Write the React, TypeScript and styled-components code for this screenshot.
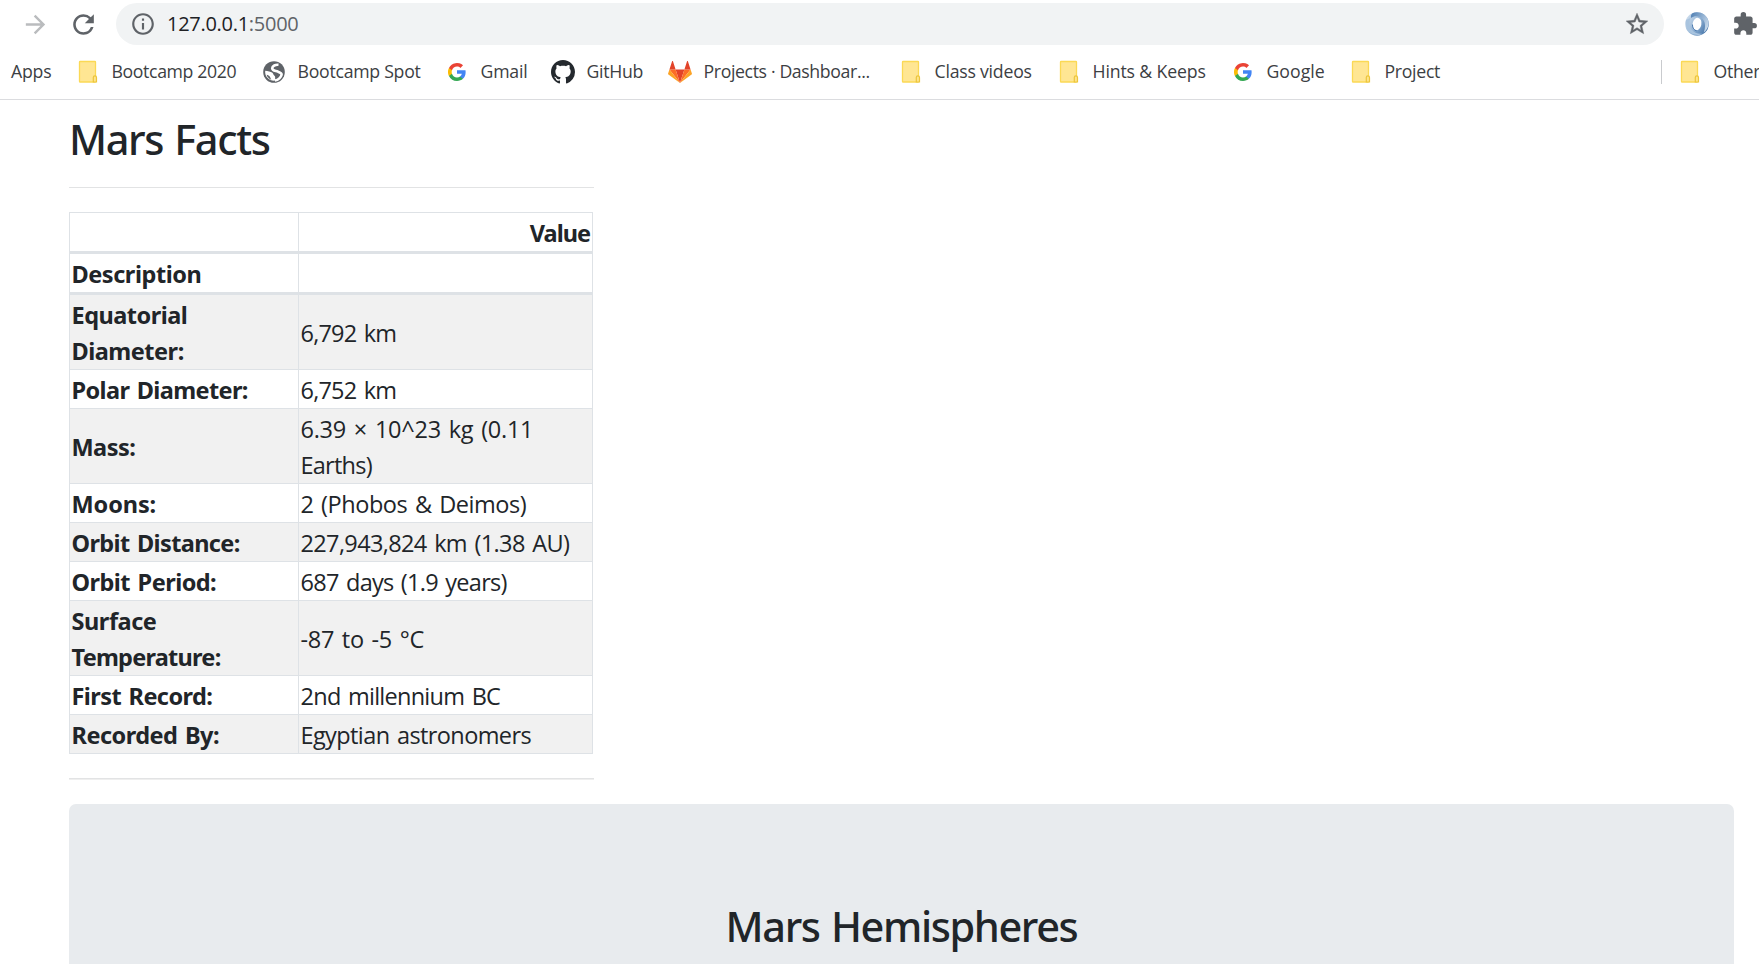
import React from "react";
import styled, { createGlobalStyle } from "styled-components";
import {
  MdArrowForward,
  MdExtension,
  MdInfoOutline,
  MdRefresh,
  MdStarBorder,
} from "react-icons/md";

const GlobalStyle = createGlobalStyle`
  *, *::before, *::after { box-sizing: border-box; }
  body {
    margin: 0;
    background: #fff;
    color: #212529;
    font-family: "Open Sans", "Noto Sans", sans-serif;
    overflow: hidden;
  }
`;

const Window = styled.div`
  width: 1759px;
  height: 964px;
  overflow: hidden;
  background: #fff;
`;

const Chrome = styled.header`
  height: 100px;
  border-bottom: 1px solid #dbdcdf;
`;

const Toolbar = styled.div`
  display: flex;
  align-items: center;
  height: 45px;
  padding: 3px 0 0 20px;
`;

const ToolButton = styled.span<{ $gap: number; $dim?: boolean }>`
  display: grid;
  place-items: center;
  flex: none;
  width: 30px;
  height: 30px;
  margin-right: ${(p) => p.$gap}px;
  color: ${(p) => (p.$dim ? "#babcbe" : "#5f6368")};
`;

const AddressBar = styled.div`
  display: flex;
  align-items: center;
  flex: none;
  width: 1548px;
  height: 42px;
  margin-right: 18px;
  padding: 0 14px;
  border-radius: 21px;
  background: #f1f3f4;
  color: #5f6368;
`;

const Address = styled.span`
  flex: 1;
  margin-left: 11px;
  font-size: 20px;
  line-height: 28px;
  letter-spacing: -0.28px;
  color: #5f6368;
`;

const Host = styled.span`
  color: #202124;
`;

const StarIcon = styled(MdStarBorder)`
  path:not([fill="none"]) {
    stroke: currentColor;
    stroke-width: 0.4px;
  }
`;

const BookmarkBar = styled.nav`
  display: flex;
  align-items: center;
  height: 54px;
`;

const Bookmark = styled.a<{ $width: number; $spacing: number }>`
  display: flex;
  align-items: center;
  flex: none;
  gap: 11.5px;
  width: ${(p) => p.$width}px;
  height: 28px;
  font-size: 17.7px;
  line-height: 24px;
  letter-spacing: ${(p) => p.$spacing}px;
  white-space: nowrap;
  color: #3c4043;
`;

const BookmarkLabel = styled.span`
  padding-bottom: 2px;
`;

const AppsLink = styled(Bookmark)`
  padding-left: 11px;
`;

const BookmarkIcon = styled.span`
  display: grid;
  place-items: center;
  flex: none;
  width: 24px;
  height: 24px;
`;

const Separator = styled.span`
  width: 1px;
  height: 24px;
  margin: 0 16px 0 auto;
  background: #c9cbce;
`;

const OtherBookmarks = styled(Bookmark)`
  overflow: hidden;
`;

const Page = styled.main`
  padding: 14px 25px 0 69px;
`;

const Title = styled.h2`
  margin: 0;
  font: 500 41.5px/50px "Noto Sans", sans-serif;
  letter-spacing: -1.4px;
  word-spacing: 2px;
`;

const Facts = styled.section`
  width: 525px;
`;

const Rule = styled.hr<{ $heavy?: boolean }>`
  height: ${(p) => (p.$heavy ? 2 : 1)}px;
  margin: ${(p) => (p.$heavy ? "24px 0" : "23px 0 24px")};
  border: 0;
  border-top: 1px solid #e2e3e4;
  background: #efefef;
`;

const Table = styled.table`
  width: 524px;
  border-collapse: collapse;
  table-layout: fixed;
  font-size: 23.5px;
  line-height: 36px;
  word-spacing: 2px;
`;

const Cell = styled.td`
  padding: 2px 2px 0 1.5px;
  border: 1px solid #dee2e6;
  text-align: left;
  vertical-align: middle;
`;

const Label = styled(Cell)`
  font-family: "Noto Sans", sans-serif;
  font-weight: 700;
`;

const HeadCell = styled(Label)<{ $right?: boolean; $height: number }>`
  height: ${(p) => p.$height}px;
  padding-top: 1px;
  border-bottom-width: 3px;
  text-align: ${(p) => (p.$right ? "right" : "left")};
`;

const LabelColumn = styled.col`
  width: 229px;
`;

const Row = styled.tr`
  &:nth-child(odd) {
    background: #f1f1f1;
  }
`;

const Line = styled.span<{ $spacing: number }>`
  display: block;
  letter-spacing: ${(p) => p.$spacing}px;
  white-space: nowrap;
`;

const Jumbotron = styled.section`
  height: 300px;
  padding-top: 97px;
  border-radius: 7px;
  background: #e8ebee;
  text-align: center;
`;

const FolderIcon = () => (
  <svg width="20" height="24" viewBox="0 0 20 24">
    <rect x="1.5" y="1.5" width="16" height="20.5" rx="0.6" fill="#ffe693" stroke="#fbd955" strokeWidth="1.3" />
    <path d="M15.3 22v-4.6a1.6 1.6 0 0 1 3.2 0V22z" fill="#ffe48a" stroke="#ecc53c" strokeWidth="1.2" />
  </svg>
);

const GlobeIcon = () => (
  <svg width="22" height="22" viewBox="0 0 22 22">
    <circle cx="11" cy="11" r="10.8" fill="#5f6368" />
    <path
      d="M15.5 3.8C12.5 3.5 9.3 4.8 9.2 7.3c0 2.6 3 2.4 5.6 3.3 2.3.8 4.2 1.4 3.8 3.2-.5 2.3-3.2 5.3-6.6 5.7"
      fill="none"
      stroke="#fff"
      strokeWidth="2.6"
    />
    <path d="M2.2 9.8c2.5.6 5.6.6 7.2 2 1 .9.8 2.2 2.1 2.9 1 .6.6 2.2.7 4.9C6.5 20.2 1.5 16 2.2 9.8z" fill="#fff" />
    <path d="M3.6 13.8c1.4.2 2.6 1 3.3 2 .6.9.7 1.9 1.5 2.9-2.3-.7-4.2-2.6-4.8-4.9z" fill="#5f6368" />
  </svg>
);

const GoogleIcon = () => (
  <svg width="18" height="18" viewBox="0 0 18 18">
    <path fill="#4285f4" d="M17.64 9.2c0-.64-.06-1.25-.16-1.84H9v3.48h4.84a4.14 4.14 0 0 1-1.8 2.72v2.26h2.92c1.7-1.57 2.68-3.88 2.68-6.62z" />
    <path fill="#34a853" d="M9 18c2.43 0 4.47-.8 5.96-2.18l-2.92-2.26c-.8.54-1.84.86-3.04.86-2.34 0-4.33-1.58-5.04-3.71H.96v2.33A9 9 0 0 0 9 18z" />
    <path fill="#fbbc05" d="M3.96 10.71A5.4 5.4 0 0 1 3.68 9c0-.6.1-1.17.28-1.71V4.96H.96a9 9 0 0 0 0 8.08l3-2.33z" />
    <path fill="#ea4335" d="M9 3.58c1.32 0 2.5.45 3.44 1.35l2.58-2.59A9 9 0 0 0 .96 4.96l3 2.33C4.67 5.16 6.66 3.58 9 3.58z" />
  </svg>
);

const GitHubIcon = () => (
  <svg width="24" height="24" viewBox="0 0 16 16">
    <path
      fill="#24292e"
      d="M8 0C3.58 0 0 3.58 0 8c0 3.54 2.29 6.53 5.47 7.59.4.07.55-.17.55-.38 0-.19-.01-.82-.01-1.49-2.01.37-2.53-.49-2.69-.94-.09-.23-.48-.94-.82-1.13-.28-.15-.68-.52-.01-.53.63-.01 1.08.58 1.23.82.72 1.21 1.87.87 2.33.66.07-.52.28-.87.51-1.07-1.78-.2-3.64-.89-3.64-3.95 0-.87.31-1.59.82-2.15-.08-.2-.36-1.02.08-2.12 0 0 .67-.21 2.2.82.64-.18 1.32-.27 2-.27s1.36.09 2 .27c1.53-1.04 2.2-.82 2.2-.82.44 1.1.16 1.92.08 2.12.51.56.82 1.27.82 2.15 0 3.07-1.87 3.75-3.65 3.95.29.25.54.73.54 1.48 0 1.07-.01 1.93-.01 2.2 0 .21.15.46.55.38A8.01 8.01 0 0 0 16 8c0-4.42-3.58-8-8-8z"
    />
  </svg>
);

const GitLabIcon = () => (
  <svg width="24" height="22" viewBox="0 0 586 540">
    <path fill="#e24329" d="M293 540 401 208H185z" />
    <path fill="#fc6d26" d="M293 540 185 208H34z" />
    <path fill="#fca326" d="M34 208 1 309a22 22 0 0 0 8 25l284 206z" />
    <path fill="#e24329" d="M34 208h151L120 8c-3-10-18-10-21 0z" />
    <path fill="#fc6d26" d="M293 540 401 208h151z" />
    <path fill="#fca326" d="m552 208 33 101a22 22 0 0 1-8 25L293 540z" />
    <path fill="#e24329" d="M552 208H401L466 8c3-10 18-10 21 0z" />
  </svg>
);

const SwirlIcon = () => (
  <svg width="24" height="24" viewBox="0 0 24 24">
    <defs>
      <linearGradient id="swirlOuter" x1="0" y1="0.2" x2="1" y2="0.8">
        <stop offset="0" stopColor="#d3e1ef" />
        <stop offset="0.5" stopColor="#92b3d5" />
        <stop offset="1" stopColor="#3b6ca3" />
      </linearGradient>
      <linearGradient id="swirlTop" x1="0" y1="0" x2="1" y2="0.6">
        <stop offset="0" stopColor="#4c7db2" />
        <stop offset="1" stopColor="#c6d8ea" />
      </linearGradient>
    </defs>
    <circle cx="12" cy="12" r="11.8" fill="url(#swirlOuter)" />
    <path d="M7.5 1.2C13-1.5 22 1.5 23.5 9.5c.7 5-1.5 8.5-4.8 11 2-5 1.8-10.5-1.2-13.5C14.5 4 10 3.3 6 6c-.3-2 .2-3.8 1.5-4.8z" fill="url(#swirlTop)" />
    <path d="M1 8c-.8 5 .5 10 5 13 4 2.5 8.5 2.5 11 .7-4.5.3-8.3-1.200-10.500-4.200C4.300 14.500 3.800 10 5.500 6" fill="#a9c4df" />
    <ellipse cx="12" cy="12" rx="4.4" ry="6.2" fill="#fff" transform="rotate(12 12 12)" />
    <path d="M7.4 12.5c0 3.5 1.9 6 4.3 6.3" fill="none" stroke="#3f71a8" strokeWidth="0.9" />
  </svg>
);

type IconKind = "folder" | "globe" | "google" | "github" | "gitlab";

const ICONS: Record<IconKind, React.FC> = {
  folder: FolderIcon,
  globe: GlobeIcon,
  google: GoogleIcon,
  github: GitHubIcon,
  gitlab: GitLabIcon,
};

const BOOKMARKS: { icon: IconKind; label: string; width: number; spacing: number }[] = [
  { icon: "folder", label: "Bootcamp 2020", width: 186, spacing: -0.37 },
  { icon: "globe", label: "Bootcamp Spot", width: 183, spacing: -0.27 },
  { icon: "google", label: "Gmail", width: 106, spacing: -0.2 },
  { icon: "github", label: "GitHub", width: 117, spacing: -0.28 },
  { icon: "gitlab", label: "Projects · Dashboar...", width: 231, spacing: -0.37 },
  { icon: "folder", label: "Class videos", width: 158, spacing: -0.23 },
  { icon: "folder", label: "Hints & Keeps", width: 174, spacing: -0.15 },
  { icon: "google", label: "Google", width: 118, spacing: 0 },
  { icon: "folder", label: "Project", width: 120, spacing: -0.3 },
];

type TextLine = [text: string, spacing: number];

const FACTS: { label: TextLine[]; value: TextLine[] }[] = [
  { label: [["Equatorial", -0.5], ["Diameter:", -0.48]], value: [["6,792 km", -0.8]] },
  { label: [["Polar Diameter:", -0.62]], value: [["6,752 km", -0.8]] },
  { label: [["Mass:", -0.55]], value: [["6.39 × 10^23 kg (0.11", -0.25], ["Earths)", -0.75]] },
  { label: [["Moons:", -0.1]], value: [["2 (Phobos & Deimos)", -0.46]] },
  { label: [["Orbit Distance:", -0.63]], value: [["227,943,824 km (1.38 AU)", -0.63]] },
  { label: [["Orbit Period:", -0.53]], value: [["687 days (1.9 years)", -0.73]] },
  { label: [["Surface", -0.45], ["Temperature:", -0.75]], value: [["-87 to -5 °C", -0.3]] },
  { label: [["First Record:", -0.58]], value: [["2nd millennium BC", -0.73]] },
  { label: [["Recorded By:", -0.52]], value: [["Egyptian astronomers", -0.6]] },
];

const Lines = ({ lines }: { lines: TextLine[] }) => (
  <>
    {lines.map(([text, spacing]) => (
      <Line key={text} $spacing={spacing}>
        {text}
      </Line>
    ))}
  </>
);

export default function App() {
  return (
    <Window>
      <GlobalStyle />
      <Chrome>
        <Toolbar>
          <ToolButton $gap={18} $dim>
            <MdArrowForward size={29} />
          </ToolButton>
          <ToolButton $gap={18}>
            <MdRefresh size={31} />
          </ToolButton>
          <AddressBar>
            <MdInfoOutline size={26} />
            <Address>
              <Host>127.0.0.1</Host>:5000
            </Address>
            <StarIcon size={26} />
          </AddressBar>
          <ToolButton $gap={18}>
            <SwirlIcon />
          </ToolButton>
          <ToolButton $gap={0}>
            <MdExtension size={26} />
          </ToolButton>
        </Toolbar>
        <BookmarkBar>
          <AppsLink $width={76} $spacing={-0.2}>
            <BookmarkLabel>Apps</BookmarkLabel>
          </AppsLink>
          {BOOKMARKS.map(({ icon, label, width, spacing }) => {
            const Icon = ICONS[icon];
            return (
              <Bookmark key={label} $width={width} $spacing={spacing}>
                <BookmarkIcon>
                  <Icon />
                </BookmarkIcon>
                <BookmarkLabel>{label}</BookmarkLabel>
              </Bookmark>
            );
          })}
          <Separator />
          <OtherBookmarks $width={81} $spacing={-0.3}>
            <BookmarkIcon>
              <FolderIcon />
            </BookmarkIcon>
            <BookmarkLabel>Other</BookmarkLabel>
          </OtherBookmarks>
        </BookmarkBar>
      </Chrome>
      <Page>
        <Facts>
          <Title>Mars Facts</Title>
          <Rule />
          <Table>
            <colgroup>
              <LabelColumn />
              <col />
            </colgroup>
            <thead>
              <tr>
                <HeadCell as="th" $height={40} />
                <HeadCell as="th" $height={40} $right>
                  <Line $spacing={-1}>Value</Line>
                </HeadCell>
              </tr>
              <tr>
                <HeadCell as="th" $height={41}>
                  <Line $spacing={-0.45}>Description</Line>
                </HeadCell>
                <HeadCell as="th" $height={41} />
              </tr>
            </thead>
            <tbody>
              {FACTS.map(({ label, value }) => (
                <Row key={label[0][0]}>
                  <Label as="th">
                    <Lines lines={label} />
                  </Label>
                  <Cell>
                    <Lines lines={value} />
                  </Cell>
                </Row>
              ))}
            </tbody>
          </Table>
          <Rule $heavy />
        </Facts>
        <Jumbotron>
          <Title>Mars Hemispheres</Title>
        </Jumbotron>
      </Page>
    </Window>
  );
}
